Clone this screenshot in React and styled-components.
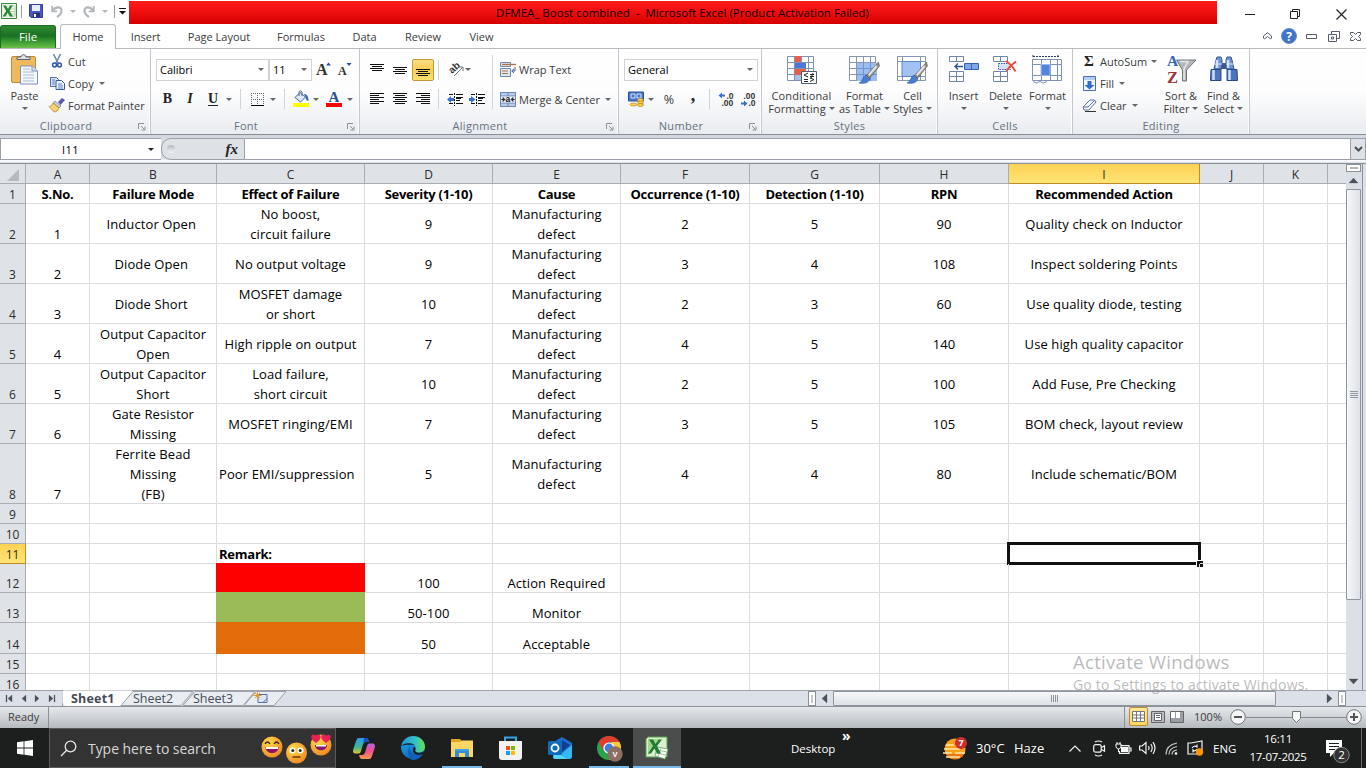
import React from "react";
import styled, { createGlobalStyle, css } from "styled-components";

const Global = createGlobalStyle`
  * { box-sizing: border-box; }
  html, body { margin: 0; padding: 0; overflow: hidden; }
  body { font-family: "Open Sans", "Noto Sans", sans-serif; font-size: 11px; color: #3b3b3b; }
  svg { display: block; flex: none; overflow: visible; }
`;

const Window = styled.div`
  width: 1366px;
  height: 768px;
  display: flex;
  flex-direction: column;
  position: relative;
  overflow: hidden;
  background: #fff;
`;

/* ---------- title bar ---------- */
const TitleBar = styled.div`
  display: flex;
  height: 24px;
  flex: none;
`;
const QuickAccess = styled.div`
  width: 129px;
  height: 22px;
  display: flex;
  align-items: center;
  padding-left: 1px;
`;
const Slot = styled.div`
  width: ${(p) => p.$w}px;
  flex: none;
  display: flex;
  align-items: center;
  justify-content: ${(p) => p.$j || "center"};
`;
const Title = styled.div`
  width: 1088px;
  height: 23px;
  margin-top: 1px;
  display: flex;
  align-items: center;
  justify-content: center;
  padding-left: 19px;
  background: linear-gradient(#fb1b17, #f01010 45%, #d40000);
  color: #120000;
  font-size: 11.5px;
  white-space: pre;
`;
const Controls = styled.div`
  flex: 1;
  display: flex;
  align-items: center;
  padding: 4px 0 0 10px;
`;

/* ---------- tab strip ---------- */
const TabStrip = styled.div`
  display: flex;
  flex: none;
  height: 25px;
  border-bottom: 1px solid #b6babf;
`;
const FileTab = styled.div`
  width: 56px;
  height: 23px;
  margin: 1px 4px 0 0;
  border: 1px solid #1d6b26;
  border-bottom: 0;
  border-radius: 3px 3px 0 0;
  background: linear-gradient(#2f8a2f, #1c7025 45%, #2b8a2b 60%, #6cc04a);
  color: #fff;
  display: flex;
  align-items: center;
  justify-content: center;
  font-size: 11.5px;
  padding: 0 0 2px;
`;
const Tab = styled.div`
  width: ${(p) => p.$w}px;
  height: 24px;
  display: flex;
  align-items: center;
  justify-content: center;
  font-size: 11px;
  white-space: nowrap;
  ${(p) =>
    p.$active &&
    css`
      height: 25px;
      margin-bottom: -1px;
      padding-bottom: 2px;
      border: 1px solid #b6babf;
      border-bottom: 0;
      border-radius: 3px 3px 0 0;
      background: #fff;
    `}
`;
const TabTools = styled.div`
  margin-left: auto;
  display: flex;
  align-items: center;
`;

/* ---------- ribbon ---------- */
const Ribbon = styled.div`
  display: flex;
  flex: none;
  height: 86px;
  background: linear-gradient(#fff, #fdfdfe 50%, #e9ecf0);
  border-bottom: 1px solid #8b9097;
`;
const Group = styled.div`
  width: ${(p) => p.$w}px;
  flex: none;
  display: flex;
  flex-direction: column;
  border-right: 1px solid #c3c7cc;
  box-shadow: inset -1px 0 0 #fff;
`;
const GroupBody = styled.div`
  height: 68px;
  display: flex;
  padding-left: ${(p) => p.$pl || 0}px;
`;
const GroupLabel = styled.div`
  display: flex;
  height: 17px;
  align-items: center;
  justify-content: center;
  position: relative;
  color: #66707e;
  padding-right: ${(p) => p.$pr ?? 18}px;
  letter-spacing: 0.3px;
`;
const Launcher = styled.span`
  position: absolute;
  right: 4px;
  top: 6px;
`;
const Column = styled.div`
  display: flex;
  flex-direction: column;
  width: ${(p) => p.$w}px;
  flex: none;
  padding-top: ${(p) => p.$pt || 0}px;
`;
const Row = styled.div`
  display: flex;
  align-items: center;
  height: ${(p) => p.$h}px;
  flex: none;
`;
const Label = styled.span`
  white-space: nowrap;
  font-size: ${(p) => p.$s || 11}px;
  line-height: 13px;
  margin-left: ${(p) => p.$ml || 0}px;
`;
const BigButton = styled.div`
  width: ${(p) => p.$w}px;
  display: flex;
  flex-direction: column;
  align-items: center;
  padding-top: 5px;
  flex: none;
`;
const BigText = styled.div`
  display: flex;
  align-items: center;
  gap: 3px;
  height: 13px;
  white-space: nowrap;
  letter-spacing: ${(p) => p.$ls || 0}px;
`;
const BigIcon = styled.div`
  height: 35px;
  display: flex;
  align-items: flex-start;
  padding-top: ${(p) => p.$top}px;
`;
const Arrow = styled.i`
  display: inline-block;
  width: 0;
  height: 0;
  flex: none;
  margin-left: ${(p) => p.$ml || 0}px;
  border: 3px solid transparent;
  border-top-color: ${(p) => p.$c || "#666"};
  border-bottom: 0;
`;
const Combo = styled.div`
  width: ${(p) => p.$w}px;
  height: 22px;
  margin-left: ${(p) => p.$ml || 0}px;
  border: 1px solid #cfd2d6;
  background: #fff;
  color: #000;
  display: flex;
  align-items: center;
  justify-content: space-between;
  padding: 0 4px 0 3px;
`;
const Divider = styled.div`
  width: 1px;
  height: ${(p) => p.$h || 20}px;
  background: ${(p) => p.$c || "#d0d3d7"};
  margin: ${(p) => p.$mt || 0}px ${(p) => p.$mr || 0}px 0 ${(p) => p.$ml || 0}px;
  flex: none;
`;
const Glyph = styled.span`
  font-family: "Liberation Serif", serif;
  font-size: ${(p) => p.$s || 14}px;
  font-weight: 700;
  font-style: ${(p) => p.$i || "normal"};
  border-bottom: ${(p) => (p.$u ? "1px solid #222" : "0")};
  padding-bottom: ${(p) => p.$up || 0}px;
  color: #222;
  line-height: 12px;
`;
const Pressed = styled.div`
  width: 22px;
  height: 22px;
  border: 1px solid #c29a3c;
  border-radius: 2px;
  background: linear-gradient(#fddd83, #fdcb50 50%, #ffe36e);
  display: flex;
  align-items: center;
  justify-content: center;
  padding-top: 6px;
`;

/* ---------- formula bar ---------- */
const FormulaBar = styled.div`
  height: 28px;
  flex: none;
  display: flex;
  padding: 3px 0;
  background: linear-gradient(#cfd4dd 0, #d6dae1 3px, #d6dae1 24px, #fff 25px, #eef0f8 27px, #cfd4dd 28px);
`;
const NameBox = styled.div`
  width: 161px;
  height: 22px;
  border: 1px solid #9ba0a8;
  border-right: 0;
  background: #fff;
  color: #000;
  display: flex;
  align-items: center;
  padding-left: 61px;
  justify-content: space-between;
  padding-right: 7px;
  letter-spacing: 0.4px;
`;
const FxArea = styled.div`
  width: 84px;
  height: 22px;
  border: 1px solid #9ba0a8;
  border-radius: 10px 0 0 10px;
  background: #dee1e6;
  display: flex;
  align-items: center;
  justify-content: space-between;
  padding: 0 6px 0 5px;
`;
const FxKnob = styled.span`
  width: 8px;
  height: 8px;
  border-radius: 50%;
  background: linear-gradient(#b3b8bf, #f4f5f7);
`;
const FormulaInput = styled.div`
  flex: 1;
  height: 22px;
  background: #fff;
  border: 1px solid #9ba0a8;
  border-left: 0;
  border-right: 0;
`;
const Expand = styled.div`
  width: 16px;
  height: 22px;
  border: 1px solid #9ba0a8;
  background: #dee1e6;
  display: flex;
  align-items: center;
  justify-content: center;
`;

/* ---------- sheet ---------- */
const Sheet = styled.div`
  height: 527px;
  flex: none;
  display: flex;
  overflow: hidden;
  border-top: 1px solid #8b9097;
`;
const GRID = "26px 64px 127px 148px 128px 128px 129px 130px 129px 191px 64px 64px 19px";
const Grid = styled.div`
  width: 1346px;
  flex: none;
  overflow: hidden;
`;
const GridRow = styled.div`
  display: grid;
  grid-template-columns: ${GRID};
  grid-template-rows: ${(p) => p.$h}px;
  height: ${(p) => p.$h}px;
`;
const Header = styled.div`
  display: flex;
  min-height: 0;
  align-items: ${(p) => (p.$row ? "flex-end" : "center")};
  justify-content: center;
  border-right: 1px solid #a9adb3;
  border-bottom: 1px solid #a9adb3;
  padding-top: ${(p) => (p.$row ? 0 : 2)}px;
  background: #dfe2e7;
  color: #2b2b2b;
  font-size: 12px;
  line-height: 17px;
  ${(p) =>
    p.$on &&
    css`
      background: linear-gradient(#ffd155, #ffe575);
      border-color: #c38a2b;
    `}
`;
const Cell = styled.div`
  display: flex;
  min-height: 0;
  align-items: ${(p) => (p.$bottom ? "flex-end" : "center")};
  justify-content: ${(p) => (p.$left ? "flex-start" : "center")};
  border-right: 1px solid #dadcdd;
  border-bottom: 1px solid #dadcdd;
  padding-left: ${(p) => (p.$left ? 2 : 0)}px;
  position: relative;
  ${(p) =>
    p.$fill &&
    css`
      background: ${p.$fill};
      border-color: ${p.$fill};
      margin: -1px 0 0 -1px;
    `}
`;
const CellText = styled.span`
  margin: ${(p) => (p.$bottom ? "0 0 -1px" : "0.5px 0 -0.5px")};
  text-align: center;
  color: #000;
  font-size: 13px;
  line-height: 20px;
  white-space: pre;
  font-weight: ${(p) => (p.$bold ? 700 : 400)};
  letter-spacing: ${(p) => (p.$bold ? -0.25 : 0.1)}px;
`;
const Selection = styled.div`
  position: absolute;
  left: -2px;
  top: -2px;
  width: 194px;
  height: 23px;
  border: 3px solid #111;
  &::after {
    content: "";
    position: absolute;
    right: -5px;
    bottom: -5px;
    width: 6px;
    height: 6px;
    background: #111;
    border-left: 1px solid #fff;
    border-top: 1px solid #fff;
  }
`;
const VScroll = styled.div`
  width: 17px;
  border-right: 1px solid #8b9097;
  background: #dbdfe6;
  display: flex;
  flex-direction: column;
  align-items: flex-start;
`;
const SplitBox = styled.div`
  width: 15px;
  height: 8px;
  background: #fff;
  border: 1px solid #8b9097;
  display: flex;
  align-items: center;
  justify-content: center;
`;
const ScrollButton = styled.div`
  width: 15px;
  height: ${(p) => p.$h}px;
  display: flex;
  align-items: center;
  justify-content: center;
`;
const VThumb = styled.div`
  width: 15px;
  height: 411px;
  border: 1px solid #8f959e;
  border-radius: 1px;
  background: linear-gradient(90deg, #f5f7f9, #dde1e7);
  display: flex;
  align-items: center;
  justify-content: center;
`;
const Edge = styled.div`
  flex: 1;
  background: #dde1e8;
`;

/* ---------- sheet tabs ---------- */
const TabsBar = styled.div`
  height: 17px;
  flex: none;
  display: flex;
  background: #dce0e8;
  border-top: 1px solid #9ea3ab;
  border-bottom: 1px solid #8b9097;
`;
const NavButtons = styled.div`
  width: 63px;
  border-right: 1px solid #9ea3ab;
  display: flex;
  align-items: center;
  justify-content: space-between;
  padding: 0 6px;
`;
const SheetTabs = styled.div`
  width: 227px;
  position: relative;
`;
const TabNames = styled.div`
  position: absolute;
  left: 8px;
  top: 0;
  display: flex;
  align-items: center;
  height: 15px;
  font-size: 12.5px;
  color: #444b58;
`;
const TabName = styled.span`
  width: ${(p) => p.$w}px;
  font-weight: ${(p) => (p.$bold ? 700 : 400)};
  letter-spacing: ${(p) => (p.$bold ? 0.2 : 0)}px;
`;
const TabFill = styled.div`
  flex: 1;
`;
const HSplit = styled.div`
  width: 8px;
  height: 15px;
  border: 1px solid #8b9097;
  background: #fff;
  display: flex;
  align-items: center;
  justify-content: center;
`;
const HThumb = styled.div`
  width: 443px;
  height: 15px;
  border: 1px solid #8f959e;
  border-radius: 1px;
  background: linear-gradient(#f7f8fa, #dde1e7);
  display: flex;
  align-items: center;
  justify-content: center;
`;

/* ---------- status bar ---------- */
const Status = styled.div`
  height: 21px;
  flex: none;
  display: flex;
  align-items: center;
  background: linear-gradient(#e4e7eb, #cfd3d8 50%, #b5babf);
`;
const ReadyBox = styled.div`
  width: 49px;
  height: 21px;
  padding: 0 0 2px 8px;
  display: flex;
  align-items: center;
  border-right: 1px solid #8b9097;
`;
const StatusRight = styled.div`
  margin-left: auto;
  width: 242px;
  height: 21px;
  padding: 0 0 2px 4px;
  display: flex;
  align-items: center;
  border-left: 1px solid #8b9097;
`;
const ViewOn = styled.div`
  width: 19px;
  height: 19px;
  flex: none;
  border: 1px solid #c08a2e;
  border-radius: 2px;
  background: linear-gradient(#ffe79a, #ffd75c);
  display: flex;
  align-items: center;
  justify-content: center;
`;

/* ---------- taskbar ---------- */
const Taskbar = styled.div`
  height: 40px;
  flex: none;
  display: flex;
  background: #1d1e1e;
  color: #fff;
`;
const Search = styled.div`
  width: 287px;
  height: 40px;
  flex: none;
  background: #333;
  border: 1px solid #5a5a5a;
  display: flex;
  align-items: center;
  padding-left: 10px;
  color: #d8d8d8;
  font-size: 14px;
`;
const SearchText = styled.span`
  width: 173px;
  flex: none;
  margin: 0 0 0 11px;
  white-space: nowrap;
  letter-spacing: -0.05px;
`;
const TaskButton = styled.div`
  width: ${(p) => p.$w || 49}px;
  height: 40px;
  flex: none;
  display: flex;
  align-items: center;
  justify-content: center;
  background: ${(p) => (p.$active ? "#4b4c4c" : "transparent")};
  box-shadow: ${(p) => (p.$active ? "inset 0 -2px 0 #76b9ed" : "none")};
`;
const Running = styled.div`
  width: 40px;
  height: 40px;
  display: flex;
  align-items: center;
  justify-content: center;
  box-shadow: inset 0 -2px 0 #76b9ed;
`;
const TrayText = styled.span`
  width: ${(p) => p.$w}px;
  flex: none;
  white-space: nowrap;
  font-size: ${(p) => p.$s}px;
`;
const Tray = styled.div`
  display: flex;
  align-items: center;
  width: 576px;
  height: 40px;
`;
const Clock = styled.div`
  width: 78px;
  flex: none;
  display: flex;
  flex-direction: column;
  align-items: center;
  font-size: 11.5px;
  line-height: 18px;
  letter-spacing: -0.3px;
  padding-bottom: 1px;
`;
const Chevrons = styled.span`
  width: 98px;
  flex: none;
  font-size: 14px;
  font-weight: 700;
  line-height: 12px;
  align-self: flex-start;
  margin: 2px 0 0 1px;
`;
const Watermark = styled.div`
  position: absolute;
  left: 1073px;
  top: 650px;
  color: rgba(140, 140, 140, 0.6);
  white-space: nowrap;
`;
const WaterTitle = styled.div`
  font-size: 18.5px;
  letter-spacing: 0.3px;
  line-height: 24px;
`;
const WaterSub = styled.div`
  font-size: 14px;
  letter-spacing: 0.17px;
  line-height: 22px;
`;

/* ---------- icons ---------- */
const ExcelLogo = ({ s = 16 }) => (
  <svg width={s} height={s} viewBox="0 0 16 16">
    <path d="M.5.5h15v15H.5z" fill="#e9f4e6" stroke="#3b8a3f" />
    <path d="M9 3h5v10H8z" fill="#fff" stroke="#8cbd84" strokeWidth=".6" />
    <path d="M9 6h5M9 8.500h5M10 11h4" stroke="#8cbd84" strokeWidth=".7" />
    <path d="M2 2.500h3l2 3.500 2-3.500h2.800L8.500 7.800 12 13.500H9L6.700 9.800 4.500 13.500H1.600L5.200 8z" fill="#2a8534" />
  </svg>
);
const TaskExcel = () => (
  <svg width="24" height="24" viewBox="0 0 24 24">
    <path d="M3 1h19v20H1V3z" fill="#d9efcf" stroke="#5b9c52" />
    <path d="M3 3h12L8 14 3 19z" fill="#8ecb6d" opacity=".7" />
    <path d="M12 11l11 2-3 10-10-3z" fill="#fff" stroke="#65a25d" strokeWidth=".8" />
    <path d="M12 14l10 2M11 17l10 2M16 12l-3 9" stroke="#80b878" strokeWidth=".8" />
    <path d="M4 3.500h4l2.500 4.500 3.200-4.500h3.300l-5 6.500 4 7.500h-4l-2.500-5-3.500 5H3l5-7.500z" fill="#217b32" />
  </svg>
);
const Save = () => (
  <svg width="14" height="14" viewBox="0 0 14 14">
    <path d="M.5.5h13v13H2L.5 12z" fill="#4b58c4" stroke="#313c9b" />
    <path d="M3 1h8v6H3z" fill="#e8eefb" />
    <path d="M4 9h7v4H4z" fill="#2a3070" />
    <path d="M5 10h2v3H5z" fill="#fff" />
  </svg>
);
const Undo = ({ flip }) => (
  <svg width="12" height="13" viewBox="0 0 12 13">
    <g transform={flip ? "translate(12 0) scale(-1 1)" : undefined} fill="none" stroke="#b3b6bb">
      <path d="M2 5.500C4 1.500 10.500 1 10.500 5.500c0 3-2 5-4.500 6.500" strokeWidth="2.200" />
      <path d="M1.200 1v5.300h5" strokeWidth="1.800" />
    </g>
  </svg>
);
const Lines = ({ rows, w = 14, h = 12 }) => (
  <svg width={w} height={h} viewBox={`0 0 ${w} ${h}`}>
    {rows.map(([x, y, l], i) => (
      <path key={i} d={`M${x} ${y + 0.5}h${l}`} stroke="#111" />
    ))}
  </svg>
);
const TOP = [[0, 0, 14], [2, 2, 10], [0, 4, 14], [2, 6, 10]];
const MID = [[0, 3, 14], [2, 5, 10], [0, 7, 14], [2, 9, 10]];
const LEFT = [[0, 0, 14], [0, 2, 9], [0, 4, 14], [0, 6, 9], [0, 8, 14], [0, 10, 9]];
const CENTER = [[0, 0, 14], [2, 2, 10], [0, 4, 14], [2, 6, 10], [0, 8, 14], [2, 10, 10]];
const RIGHT = [[0, 0, 14], [5, 2, 9], [0, 4, 14], [5, 6, 9], [0, 8, 14], [5, 10, 9]];
const Indent = ({ out }) => (
  <svg width="16" height="13" viewBox="0 0 16 13">
    <path d="M2 1.500h4M9 1.500h7M9 4.500h7M9 7.500h4M2 10.500h4M9 10.500h7" stroke="#111" />
    <path d="M9 5.500h5" stroke="#111" />
    <path d="M7.500 0v13" stroke="#111" strokeDasharray="2 1" />
    <path d={out ? "M4 3v2h3v3H4v2L0 6.500z" : "M2 3v2H0v3h2v2l4.500-3.500z"} fill="#3a6fd0" />
  </svg>
);
const Orient = () => (
  <svg width="16" height="15" viewBox="0 0 16 15">
    <text x="0" y="0" fontSize="10" fontFamily="Liberation Sans" fontWeight="700" fill="#333" transform="translate(4 12) rotate(-42)">ab</text>
    <path d="M6 14L14.500 5.500M11 5h4v4" fill="none" stroke="#777" />
  </svg>
);
const Wrap = () => (
  <svg width="16" height="15" viewBox="0 0 16 15">
    <path d="M.5.5h10v4H.5zM.5 6.500h10v8H.5z" fill="#dfe8f5" stroke="#7088ab" />
    <path d="M2 2.500h14" stroke="#b0714a" strokeWidth="1.400" />
    <path d="M2 9h6M2 11.500h6" stroke="#b0714a" />
    <path d="M15 5v4h-3m2-2l-2.300 2 2.300 2" fill="none" stroke="#3f5f9a" />
  </svg>
);
const Merge = () => (
  <svg width="16" height="15" viewBox="0 0 16 15">
    <path d="M.5.500h15v14H.5z" fill="#b8cdec" stroke="#6d86ae" />
    <path d="M0 4h16M0 11h16M8 0v4M8 11v4" stroke="#6d86ae" />
    <path d="M1 4.500h14v6H1z" fill="#e9f0fa" />
    <path d="M1 7.500h3M12 7.500h3M3 5.500v4l2-2zM13 5.500v4l-2-2z" stroke="#222" fill="#222" strokeWidth=".7" />
    <text x="5.600" y="10" fontSize="8.500" fontFamily="Liberation Sans" fontWeight="700" fill="#111">a</text>
  </svg>
);
const Scissors = () => (
  <svg width="10" height="14" viewBox="0 0 10 14">
    <path d="M1.500 0l4.500 9M8.500 0L4 9" stroke="#6d86ae" strokeWidth="1.600" />
    <circle cx="2.500" cy="11" r="1.900" fill="none" stroke="#2b56a8" strokeWidth="1.500" />
    <circle cx="7.500" cy="11" r="1.900" fill="none" stroke="#2b56a8" strokeWidth="1.500" />
  </svg>
);
const Copy = () => (
  <svg width="15" height="13" viewBox="0 0 15 13">
    <path d="M.5.500h6l2 2v7h-8z" fill="#dbe7f8" stroke="#4a6fa8" />
    <path d="M6 3.500h5.500l3 3v6H6z" fill="#eaf2fc" stroke="#345d9d" />
    <path d="M2 3h3M2 5h3M2 7h3M8 7h4M8 9h5M8 11h5" stroke="#5a86c4" />
  </svg>
);
const Brush = () => (
  <svg width="16" height="14" viewBox="0 0 16 14">
    <path d="M9 4l4-4 3 2-4.500 5z" fill="#5a56a8" />
    <path d="M6 3l6 5-2 2-6-5z" fill="#c7ccd6" stroke="#6a7080" strokeWidth=".6" />
    <path d="M4 5l6 5c-1 3-3 4-5 4L0 8.500C2 8 3 7 4 5z" fill="#f2c752" stroke="#a9812a" strokeWidth=".6" />
    <path d="M2 8.500l5 4M4 7l5 4" stroke="#fff3c0" strokeWidth=".8" />
  </svg>
);
const Paste = () => (
  <svg width="27" height="31" viewBox="0 0 27 31">
    <rect x=".5" y="2.500" width="24" height="26" rx="1.500" fill="#efb95f" stroke="#bd8a3c" />
    <path d="M6 5.500V3h4c0-3 5-3 5 0h4v2.500z" fill="#dfe2e7" stroke="#596270" />
    <path d="M9.500 12h12l5 5v13h-17z" fill="#f4f8fd" stroke="#7d93b5" />
    <path d="M21 12v5h5" fill="#d5e1f2" stroke="#7d93b5" />
    <path d="M12 15h7M12 18h11M12 21h11M12 24h11M12 27h11" stroke="#a6bbda" />
  </svg>
);
const Borders = () => (
  <svg width="13" height="13" viewBox="0 0 13 13">
    <path d="M.5 0v12M6.500 0v12M12.500 0v12M0 .500h13M0 6.500h13" stroke="#666" strokeDasharray="1 1" />
    <path d="M0 12.500h13" stroke="#000" />
  </svg>
);
const Bucket = () => (
  <svg width="16" height="16" viewBox="0 0 16 16">
    <path d="M2 6.500l5-5 5.500 4.500-5 5z" fill="#dfe9f7" stroke="#46638f" />
    <path d="M6 5V1.500a1.500 1.500 0 013 0V5" fill="none" stroke="#46638f" />
    <path d="M11 3c3 0 4.500 2 4.500 7-2 0-3-2-3-4z" fill="#3b6cbc" />
    <path d="M0 12h16v4H0z" fill="#ff0" />
  </svg>
);
const FontColor = () => (
  <svg width="16" height="16" viewBox="0 0 16 16">
    <text x="2.500" y="10.500" fontSize="15" fontFamily="Liberation Serif" fontWeight="700" fill="#2d4f92">A</text>
    <path d="M0 12h16v4H0z" fill="#f00" />
  </svg>
);
const GrowFont = ({ down }) => (
  <svg width="15" height="15" viewBox="0 0 15 15">
    <text x="0" y="13" fontSize={down ? 12 : 16} fontFamily="Liberation Serif" fontWeight="700" fill="#333">A</text>
    <path d={down ? "M8.500 1h5L11 4z" : "M10 3.500h5L12.500.500z"} fill="#2d4fa0" />
  </svg>
);
const Currency = () => (
  <svg width="17" height="16" viewBox="0 0 17 16">
    <path d="M.5 1h15v9H.5z" fill="#4a78c9" stroke="#2b509a" />
    <path d="M3 3h4v4H3zM9 3h4v4H9z" fill="none" stroke="#cfe0fa" />
    <ellipse cx="12.500" cy="9" rx="3" ry="1.500" fill="#ffd24a" stroke="#a87412" strokeWidth=".6" />
    <ellipse cx="12.500" cy="11.500" rx="3" ry="1.500" fill="#ffd24a" stroke="#a87412" strokeWidth=".6" />
    <ellipse cx="12.500" cy="14" rx="3" ry="1.500" fill="#ffd24a" stroke="#a87412" strokeWidth=".6" />
    <ellipse cx="5.500" cy="13.500" rx="3.500" ry="1.500" fill="#ffd24a" stroke="#a87412" strokeWidth=".6" />
  </svg>
);
const Decimal = ({ dec }) => (
  <svg width="16" height="14" viewBox="0 0 16 14">
    <text x={dec ? 3.500 : 8.500} y="6.500" fontSize="8.500" fontWeight="700" fontFamily="Liberation Sans" fill="#333">{dec ? ".00" : ".0"}</text>
    <text x={dec ? 8.500 : 3.500} y="14" fontSize="8.500" fontWeight="700" fontFamily="Liberation Sans" fill="#333">{dec ? ".0" : ".00"}</text>
    <path d={dec ? "M1 10.500h3v-2l3.500 3-3.500 3v-2H1z" : "M.5 3.500l3.500-3v2h3v2H4v2z"} fill="#3a6fd0" />
  </svg>
);
const grid = "M.5.500h26v24H.5zM0 6.500h27M0 12.500h27M0 18.500h27M7.500 0v24M14.500 0v24M21.500 0v24";
const CondFormat = () => (
  <svg width="30" height="28" viewBox="0 0 30 28">
    <path d={grid} fill="#fff" stroke="#7f93b5" />
    <path d="M8 0h6v6H8zM8 13h11v6H8z" fill="#ee5a44" />
    <path d="M8 7h11v5H8z" fill="#4a78d8" />
    <path d="M8 19h6v5H8z" fill="#a9c0ea" />
    <path d="M14.500 15.500h15v12h-15z" fill="#fff" stroke="#506078" />
    <path d="M21 17l-4 2 4 2M17 23.500h4M17 25.500h4M23 18.500h4M23 20.500h4M26 17l-2 5M23 22l4 1.500-4 2" fill="none" stroke="#222" />
  </svg>
);
const PaintBrush = () => (
  <g>
    <path d="M29.500 6L17 20l3 3L30.500 10z" fill="#8f8b80" stroke="#5c5a55" strokeWidth=".6" />
    <path d="M27 9l-8 9.500 1.500 1.500 8-9z" fill="#e5e2d8" />
    <path d="M17 19l4 4c-2 4-5 5-11 4 4-1 3-6 7-8z" fill="#4a7fd0" stroke="#27539c" strokeWidth=".6" />
  </g>
);
const FormatTable = () => (
  <svg width="31" height="28" viewBox="0 0 31 28">
    <path d={grid} fill="#fff" stroke="#8796b1" />
    <path d="M8 7h20v18H8z" fill="#9dbcf0" />
    <path d="M8 12.500h20M8 18.500h20M14.500 7v18M21.500 7v18" stroke="#6f92d0" />
    <PaintBrush />
  </svg>
);
const CellStyles = () => (
  <svg width="31" height="28" viewBox="0 0 31 28">
    <path d="M.5.500h28v24H.5zM0 5.500h29M0 20.500h29M5.500 0v25M23.500 0v25" fill="#fff" stroke="#8796b1" />
    <path d="M5 5.500h18.500v15H5z" fill="#a3c2f4" stroke="#5c82c8" />
    <PaintBrush />
  </svg>
);
const InsertCells = () => (
  <svg width="30" height="27" viewBox="0 0 30 27">
    <path d="M.5.500h14v5H.5zM7.500 0v6M.5 15.500h14v10H.5zM7.500 15v11M0 20.500h15" fill="#fff" stroke="#7085a8" />
    <path d="M15.500 7.500h14v6h-14zM22.500 7v7" fill="#7ea6ec" stroke="#365fae" />
    <path d="M6 10.500h8M9 7.500l-3 3 3 3" fill="none" stroke="#31528c" strokeWidth="1.300" />
  </svg>
);
const DeleteCells = () => (
  <svg width="25" height="27" viewBox="0 0 25 27">
    <path d="M.5.500h14v5H.5zM7.500 0v6M.5 15.500h14v10H.5zM7.500 15v11M0 20.500h15" fill="#fff" stroke="#7085a8" />
    <path d="M5.500 7.500h12v6h-12z" fill="#d5e3fa" stroke="#365fae" strokeDasharray="1.500 1" />
    <path d="M13 5c4 2.500 7 6 9.500 10.500M23 5.500c-4 3-7.500 6-9.500 9.500" stroke="#f04a34" strokeWidth="2" fill="none" />
  </svg>
);
const FormatCells = () => (
  <svg width="31" height="29" viewBox="0 0 31 29">
    <path d="M1 1.500h26M1 0v3M26 0v3" stroke="#26395e" strokeDasharray="2 1" />
    <path d="M.5 4.500h29v21H.5zM0 9.500h30M0 20.500h30M9.500 4v21M18.500 4v21M25.500 4v21" fill="#fff" stroke="#8093b4" />
    <path d="M9 9.500h9v11H9z" fill="#5583dc" stroke="#9db9ec" />
    <path d="M1 26.500q3 3 7 0 3 3 7 0" fill="none" stroke="#8093b4" />
  </svg>
);
const Fill = () => (
  <svg width="13" height="15" viewBox="0 0 13 15">
    <path d="M.5.500h12v14H.5z" fill="#f2f6fd" stroke="#4a6fae" />
    <path d="M1 1h11v3H1z" fill="#b9cdf0" />
    <path d="M4.500 5h4v4h3l-5 4.500L1.500 9h3z" fill="#2f6cd4" />
  </svg>
);
const Eraser = () => (
  <svg width="15" height="13" viewBox="0 0 15 13">
    <path d="M1 8l7-7h4.500L14 3 7 11H2z" fill="#f4f7fc" stroke="#60779f" />
    <path d="M1 8h5l7-7" fill="none" stroke="#60779f" />
    <path d="M3 12.500h11" stroke="#333" />
  </svg>
);
const SortFilter = () => (
  <svg width="29" height="29" viewBox="0 0 29 29">
    <text x="0" y="11" fontSize="15.500" fontFamily="Liberation Serif" fontWeight="700" fill="#3767b5">A</text>
    <text x="0" y="28" fontSize="16.500" fontFamily="Liberation Serif" fontWeight="700" fill="#a03535">Z</text>
    <path d="M9.500 5h19.500l-9.500 10v11h-4V15z" fill="#b5b8bb" stroke="#707478" />
    <path d="M13 6.500h8l-4 7.500v11" fill="none" stroke="#e6e8ea" strokeWidth="1.500" />
  </svg>
);
const Binoculars = () => (
  <svg width="28" height="27" viewBox="0 0 28 27">
    <path d="M6 4l1-3h4l1 3v9H4zM16 4l1-3h4l1 3 2 9h-8z" fill="#6e93d4" stroke="#38588f" />
    <path d="M11 7h6v6h-6z" fill="#38588f" />
    <path d="M1 13.500h10v11H.5zM17 13.500h10l.5 11H17z" fill="#4b74be" stroke="#2a4a85" />
    <path d="M3.500 14v10M19.500 14v10M7 4v8M18 4v8" stroke="#cfe0fa" strokeWidth="2.500" />
    <path d="M4 8h8M16 8h8" stroke="#dfe9fa" />
  </svg>
);
const LauncherIcon = () => (
  <svg width="8" height="8" viewBox="0 0 8 8">
    <path d="M.5 6V.500H6M3 3l3.500 3.500M7 3.500V7H3.500" fill="none" stroke="#8b9097" />
  </svg>
);
const Tri = ({ d, c = "#4b5058", w = 9, h = 9 }) => (
  <svg width={w} height={h} viewBox={`0 0 ${w} ${h}`}>
    <path d={d} fill={c} stroke={c} strokeWidth=".3" />
  </svg>
);

/* ---------- taskbar icons ---------- */
const WinLogo = () => (
  <svg width="16" height="16" viewBox="0 0 16 16">
    <path d="M0 2.200l6.600-.9v6.300H0zM7.400 1.200L16 0v7.600H7.400zM0 8.400h6.600v6.300L0 13.800zM7.400 8.400H16V16l-8.600-1.200z" fill="#fff" />
  </svg>
);
const Lens = () => (
  <svg width="17" height="17" viewBox="0 0 17 17">
    <circle cx="10.500" cy="6.500" r="5.300" fill="none" stroke="#e6e6e6" strokeWidth="1.300" />
    <path d="M6.700 10.300L1 16" stroke="#e6e6e6" strokeWidth="1.400" />
  </svg>
);
const Emojis = () => (
  <svg width="72" height="32" viewBox="0 0 72 32">
    <defs>
      <radialGradient id="face" cx=".35" cy=".3" r=".8">
        <stop offset="0" stopColor="#ffdb4a" />
        <stop offset="1" stopColor="#ee8420" />
      </radialGradient>
    </defs>
    <circle cx="11" cy="15" r="10.500" fill="url(#face)" />
    <path d="M4 12q2.500-4 5 0M13 12q2.500-4 5 0" fill="none" stroke="#4a2510" strokeWidth="1.400" />
    <path d="M4.500 15h13c0 8-13 8-13 0z" fill="#8c1465" />
    <path d="M5 15h12v2H5z" fill="#fff" />
    <circle cx="35.500" cy="21" r="10.500" fill="url(#face)" />
    <circle cx="31.500" cy="18.500" r="3" fill="#fff" />
    <circle cx="39.500" cy="18.500" r="3" fill="#fff" />
    <circle cx="31.800" cy="18.500" r="1.500" fill="#38251b" />
    <circle cx="39.200" cy="18.500" r="1.500" fill="#38251b" />
    <path d="M31.500 25h8" stroke="#6b3510" strokeWidth="1.500" />
    <circle cx="60" cy="13" r="10.500" fill="url(#face)" />
    <path d="M55 11c-9-6-3-11 0-7 4-4 8 2 0 7zM65 11c-9-6-3-11 0-7 4-4 8 2 0 7z" fill="#e82155" />
    <path d="M54 13h12c0 7-12 7-12 0z" fill="#8c1465" />
    <path d="M55 13h10v1.500H55z" fill="#fff" />
  </svg>
);
const Copilot = () => (
  <svg width="22" height="21" viewBox="0 0 22 21">
    <defs>
      <linearGradient id="cpa" x1="0" y1="0" x2="0" y2="1">
        <stop offset="0" stopColor="#2b9df0" />
        <stop offset=".6" stopColor="#3fb68b" />
        <stop offset="1" stopColor="#e7c52c" />
      </linearGradient>
      <linearGradient id="cpb" x1="0" y1="0" x2="0" y2="1">
        <stop offset="0" stopColor="#b75fe0" />
        <stop offset=".5" stopColor="#f0508c" />
        <stop offset="1" stopColor="#ff9a50" />
      </linearGradient>
    </defs>
    <path d="M6 0h7c2 0 2.500 2 3 4h-3c-2 0-3 2-3.500 4L8 13c-.5 2-1.500 2.500-3 2.500H3c-3 0-3.500-2-2.500-5L3 3c.6-2 1.500-3 3-3z" fill="url(#cpa)" />
    <path d="M11 0h2c2 0 2.500 2 3 4h-3c-1.500 0-2.300 1-2.800 2.500z" fill="#1a4fc4" />
    <path d="M16 21H9c-2 0-2.500-2-3-4h3c2 0 3-2 3.500-4L14 8c.5-2 1.500-2.500 3-2.500h2c3 0 3.500 2 2.500 5L19 18c-.6 2-1.500 3-3 3z" fill="url(#cpb)" />
  </svg>
);
const EdgeLogo = () => (
  <svg width="24" height="24" viewBox="0 0 24 24">
    <defs>
      <linearGradient id="eg" x1="0" y1=".4" x2="1" y2=".4">
        <stop offset="0" stopColor="#1d94dc" />
        <stop offset=".6" stopColor="#35c1c8" />
        <stop offset="1" stopColor="#6be04a" />
      </linearGradient>
      <linearGradient id="eb" x1="0" y1="0" x2="1" y2="1">
        <stop offset="0" stopColor="#1d9be6" />
        <stop offset="1" stopColor="#0c4fa3" />
      </linearGradient>
    </defs>
    <path d="M0 11a12 12 0 0024 0c0-2-24-4-24 0z" fill="url(#eb)" />
    <path d="M0 11C1 4 6 0 12 0c7 0 12 5 12 10.500 0 4-3 6-6 6-2.500 0-4.500-.8-4-2 1.500-1.500 1.200-6-3.500-7C6 6.500 1 8 0 11z" fill="url(#eg)" />
    <path d="M9 9c-2 6 3 12 13 9-2.500 4-6 6-10 6-5 0-6.500-10-3-15z" fill="#1160b7" />
    <path d="M14 14.500c1 3 5 3 9 1l-1 2.500c-5 2-10 .5-10-4 0-2 1-3 1.500-3 1.500 1 1 2.500.5 3.500z" fill="#1d1e1e" />
  </svg>
);
const Folder = () => (
  <svg width="22" height="19" viewBox="0 0 22 19">
    <path d="M0 0h9l2 2h11v16H0z" fill="#e9a51f" />
    <path d="M0 3h9l2-1.500h11V18H0z" fill="#fdd766" />
    <path d="M4 10h14v8h-4v-4H8v4H4z" fill="#2f8ed6" />
    <path d="M4 10h14v2H4z" fill="#3fa3ea" />
  </svg>
);
const Store = () => (
  <svg width="23" height="24" viewBox="0 0 23 24">
    <path d="M6 7V1.500h11V7" fill="none" stroke="#2fa9e0" strokeWidth="2" />
    <path d="M0 5h23v16q0 3-3 3H3q-3 0-3-3z" fill="#f2f2f2" />
    <path d="M7 10h4v4H7z" fill="#f25022" />
    <path d="M12 10h4v4h-4z" fill="#7fba00" />
    <path d="M7 15h4v4H7z" fill="#00a4ef" />
    <path d="M12 15h4v4h-4z" fill="#ffb900" />
  </svg>
);
const Outlook = () => (
  <svg width="24" height="22" viewBox="0 0 24 22">
    <path d="M4 6L14 0l10 6v13q0 3-3 3H6z" fill="#1a6fd0" />
    <path d="M14 3l8 5-8 7z" fill="#123e8c" />
    <path d="M24 8v11q0 3-3 3H7z" fill="#35b8f1" />
    <path d="M6 14l13 8H7q-2 0-2-2z" fill="#50d9ff" />
    <rect y="4" width="14" height="14" rx="1.500" fill="#0f6cbd" />
    <circle cx="7" cy="11" r="3.500" fill="none" stroke="#fff" strokeWidth="1.800" />
  </svg>
);
const Chrome = () => (
  <svg width="24" height="24" viewBox="0 0 24 24">
    <circle cx="12" cy="12" r="12" fill="#2ba24c" />
    <path d="M1.600 6A12 12 0 0122.400 6H12l-5 9z" fill="#e33b2e" />
    <path d="M22.400 6A12 12 0 0112 24l5.500-9L14 6z" fill="#fcc934" />
    <circle cx="12" cy="12" r="5.600" fill="#fff" />
    <circle cx="12" cy="12" r="4.400" fill="#3d7de8" />
    <circle cx="18" cy="18" r="7.700" fill="#8d6e63" />
    <text x="18" y="20.800" textAnchor="middle" fontSize="7.500" fontWeight="700" fontFamily="Liberation Sans" fill="#fff">V</text>
  </svg>
);
const Weather = () => (
  <svg width="24" height="23" viewBox="0 0 24 23">
    <circle cx="12" cy="12" r="10.500" fill="#f9a01b" />
    <path d="M3 17h18a10.500 10.500 0 01-18 0z" fill="#ef7417" />
    <path d="M3 8h8M1 12h16M0 16h9M12 16h10M3 20h14" stroke="#ffe6a3" strokeWidth="1.500" />
    <circle cx="18" cy="6" r="6" fill="#cf2e2e" />
    <text x="18" y="9" textAnchor="middle" fontSize="9" fontWeight="700" fontFamily="Open Sans" fill="#fff">7</text>
  </svg>
);
const stroke = { fill: "none", stroke: "#f2f2f2", strokeWidth: 1.2 };
const UpChevron = () => (
  <svg width="12" height="7" viewBox="0 0 12 7"><path d="M.5 6.500L6 1l5.500 5.500" {...stroke} /></svg>
);
const MeetNow = () => (
  <svg width="12" height="17" viewBox="0 0 12 17">
    <rect x=".7" y="4.700" width="7.500" height="7.500" rx="2" {...stroke} />
    <path d="M8.500 7.500l3-1.700v5.500l-3-1.700M2 2q3.500-2 7 0M2 15q3.500 2 7 0" {...stroke} />
  </svg>
);
const Battery = () => (
  <svg width="16" height="13" viewBox="0 0 16 13">
    <path d="M5 3.600h9v7.800H4.500V9M14.500 6h1.500v3h-1.500" {...stroke} />
    <path d="M6 5h7v5H6z" fill="#fff" />
    <path d="M1 2h5v3q-1 2-2.500 2T1 5zM2 0v2M5 0v2M3.500 7v3" fill="#1d1e1e" stroke="#fff" />
  </svg>
);
const Speaker = () => (
  <svg width="17" height="14" viewBox="0 0 17 14">
    <path d="M.6 5h2.500L7 1.500v11L3.100 9H.6zM9.500 5q1.300 2 0 4M11.800 3q2.800 4 0 8M14 1.200q4 5.800 0 11.600" {...stroke} />
  </svg>
);
const Wifi = () => (
  <svg width="13" height="13" viewBox="0 0 13 13">
    <path d="M1 12.500Q1 3 12 1M4 12.500Q4 6 12 4.500M7 12.500q0-4 5-4.500" {...stroke} stroke="#c9c9c9" />
    <circle cx="11" cy="11.500" r="1.300" fill="#fff" />
  </svg>
);
const Sync = () => (
  <svg width="17" height="16" viewBox="0 0 17 16">
    <path d="M4 3H1v11h9M4 3l11-2v9M5 8q2-3 5-1V4.500M10 9q-2 3-4 1v2.500" {...stroke} />
    <circle cx="12.500" cy="12" r="3.700" fill="#ff9800" />
  </svg>
);
const Notify = () => (
  <svg width="25" height="25" viewBox="0 0 25 25">
    <path d="M1 4h16v13H9l-4 4v-4H1z" fill="#fff" />
    <path d="M4 7.500h10M4 10.500h10M4 13.500h6" stroke="#1d1e1e" />
    <circle cx="16.500" cy="19" r="7.700" fill="#333" stroke="#888" />
    <text x="16.500" y="23" textAnchor="middle" fontSize="11.500" fontFamily="Open Sans" fill="#fff">2</text>
  </svg>
);

/* ---------- data ---------- */
const MD = "Manufacturing\ndefect";
const rows = [
  { n: 1, h: 20, bold: true, c: ["S.No.", "Failure Mode", "Effect of Failure", "Severity (1-10)", "Cause", "Occurrence (1-10)", "Detection (1-10)", "RPN", "Recommended Action"] },
  { n: 2, h: 40, c: ["1", "Inductor Open ", "No boost,\ncircuit failure", "9", MD, "2", "5", "90", "Quality check on Inductor"] },
  { n: 3, h: 40, c: ["2", "Diode Open ", "No output voltage", "9", MD, "3", "4", "108", "Inspect soldering Points"] },
  { n: 4, h: 40, c: ["3", "Diode Short ", "MOSFET damage\nor short", "10", MD, "2", "3", "60", "Use quality diode, testing"] },
  { n: 5, h: 40, c: ["4", "Output Capacitor\nOpen", "High ripple on output", "7", MD, "4", "5", "140", "Use high quality capacitor"] },
  { n: 6, h: 40, c: ["5", "Output Capacitor\nShort", "Load failure,\nshort circuit", "10", MD, "2", "5", "100", "Add Fuse, Pre Checking"] },
  { n: 7, h: 40, c: ["6", "Gate Resistor\nMissing", "MOSFET ringing/EMI", "7", MD, "3", "5", "105", "BOM check, layout review"] },
  { n: 8, h: 60, c: ["7", "Ferrite Bead\nMissing\n(FB)", "Poor EMI/suppression", "5", MD, "4", "4", "80", "Include schematic/BOM"] },
  { n: 9, h: 20, c: [] },
  { n: 10, h: 20, c: [] },
  { n: 11, h: 20, bold: true, c: ["", "", "Remark:"] },
  { n: 12, h: 29, low: true, fill: "#ff0000", c: ["", "", "", "100", "Action Required"] },
  { n: 13, h: 30, low: true, fill: "#9bbb59", c: ["", "", "", "50-100", "Monitor"] },
  { n: 14, h: 31, low: true, fill: "#e26b0a", c: ["", "", "", "50", "Acceptable"] },
  { n: 15, h: 20, c: [] },
  { n: 16, h: 20, c: [] },
];
const cols = "ABCDEFGHIJKL".split("");

const Big = ({ w, icon, a, b, top = 2, ls }) => (
  <BigButton $w={w}>
    <BigIcon $top={top}>{icon}</BigIcon>
    <BigText $ls={ls}>{a}</BigText>
    <BigText $ls={ls}>
      {b}
      <Arrow />
    </BigText>
  </BigButton>
);

export default function App() {
  return (
    <Window>
      <Global />
      <TitleBar>
        <QuickAccess>
          <Slot $w={16}><ExcelLogo /></Slot>
          <Divider $h={13} $ml={4} $mr={7} $c="#9a9da2" />
          <Slot $w={14}><Save /></Slot>
          <Slot $w={28}><Undo /></Slot>
          <Slot $w={4}><Arrow $c="#b3b6bb" /></Slot>
          <Slot $w={28}><Undo flip /></Slot>
          <Slot $w={4}><Arrow $c="#b3b6bb" /></Slot>
          <Divider $h={13} $ml={7} $mr={4} $c="#9a9da2" />
          <svg width="7" height="7"><path d="M0 .500h7" stroke="#111" /><path d="M0 3h7L3.500 6.500z" fill="#111" /></svg>
        </QuickAccess>
        <Title>{"DFMEA_ Boost combined  -  Microsoft Excel (Product Activation Failed)"}</Title>
        <Controls>
          <Slot $w={45}><svg width="10" height="10"><path d="M0 5.500h10" stroke="#222" /></svg></Slot>
          <Slot $w={46}>
            <svg width="10" height="10"><path d="M.5 2.500h7v7h-7zM2.500 2.500v-2h7v7h-2" fill="none" stroke="#222" /></svg>
          </Slot>
          <Slot $w={46}><svg width="11" height="11"><path d="M.5.500l10 10M10.500.500l-10 10" stroke="#222" strokeWidth="1.200" /></svg></Slot>
        </Controls>
      </TitleBar>

      <TabStrip>
        <FileTab>File</FileTab>
        <Tab $w={56} $active>Home</Tab>
        <Tab $w={59}>Insert</Tab>
        <Tab $w={88}>Page Layout</Tab>
        <Tab $w={76}>Formulas</Tab>
        <Tab $w={51}>Data</Tab>
        <Tab $w={66}>Review</Tab>
        <Tab $w={51}>View</Tab>
        <TabTools>
          <Slot $w={22}><svg width="9" height="8"><path d="M.5 4L4.500.700 8.500 4v2l-1 1L4.500 4.500 1.500 7 .5 6z" fill="#fff" stroke="#555d68" /></svg></Slot>
          <Slot $w={22}>
            <svg width="16" height="16">
              <circle cx="8" cy="8" r="7.500" fill="#3f74cc" stroke="#6d8fc8" />
              <text x="8" y="12.500" textAnchor="middle" fontSize="12" fontWeight="700" fill="#fff">?</text>
            </svg>
          </Slot>
          <Slot $w={23}><svg width="11" height="5"><path d="M.5.500h10v4H.5z" fill="#fff" stroke="#555d68" /></svg></Slot>
          <Slot $w={21}>
            <svg width="12" height="11"><path d="M.5 3.500h8v7h-8zM3.500 6h2v2h-2zM3.500 3V.500h8v7H9" fill="none" stroke="#555d68" /></svg>
          </Slot>
          <Slot $w={22}>
            <svg width="11" height="9"><path d="M.5.500h3l2 2 2-2h3v2l-2 2 2 2v2h-3l-2-2-2 2h-3v-2l2-2-2-2z" fill="#fff" stroke="#555d68" /></svg>
          </Slot>
        </TabTools>
      </TabStrip>

      <Ribbon>
        <Group $w={151}>
          <GroupBody>
            <Big w={49} icon={<Paste />} a="Paste" b="" top={0} />
            <Column $w={100} $pt={1}>
              <Row $h={22}><Slot $w={16}><Scissors /></Slot><Label $ml={3}>Cut</Label></Row>
              <Row $h={22}><Slot $w={16}><Copy /></Slot><Label $ml={3}>Copy</Label><Arrow $ml={5} /></Row>
              <Row $h={22}><Slot $w={16}><Brush /></Slot><Label $ml={3}>Format Painter</Label></Row>
            </Column>
          </GroupBody>
          <GroupLabel>Clipboard<Launcher><LauncherIcon /></Launcher></GroupLabel>
        </Group>

        <Group $w={209}>
          <GroupBody>
            <Column $w={208} $pt={5}>
              <Row $h={31}>
                <Combo $w={113} $ml={5}>Calibri<Arrow /></Combo>
                <Combo $w={43}>11<Arrow /></Combo>
                <Slot $w={22}><GrowFont /></Slot>
                <Slot $w={22}><GrowFont down /></Slot>
              </Row>
              <Row $h={28}>
                <Slot $w={33}><Glyph>B</Glyph></Slot>
                <Slot $w={12}><Glyph $i="italic">I</Glyph></Slot>
                <Slot $w={34}><Glyph $u>U</Glyph></Slot>
                <Arrow $ml={-4} /><Divider $ml={8} $mr={10} />
                <Borders /><Arrow $ml={6} /><Divider $ml={8} $mr={8} />
                <Bucket /><Arrow $ml={4} /><Slot $w={7} />
                <FontColor /><Arrow $ml={5} />
              </Row>
            </Column>
          </GroupBody>
          <GroupLabel>Font<Launcher><LauncherIcon /></Launcher></GroupLabel>
        </Group>

        <Group $w={259}>
          <GroupBody $pl={6}>
            <Column $w={126} $pt={5}>
              <Row $h={31}>
                <Slot $w={22}><Lines rows={TOP} /></Slot>
                <Slot $w={24}><Lines rows={MID} /></Slot>
                <Pressed><Lines rows={TOP} h={8} /></Pressed>
                <Divider $ml={4} $mr={9} />
                <Orient /><Arrow $ml={1} />
              </Row>
              <Row $h={28}>
                <Slot $w={22}><Lines rows={LEFT} /></Slot>
                <Slot $w={24}><Lines rows={CENTER} /></Slot>
                <Slot $w={22}><Lines rows={RIGHT} /></Slot>
                <Divider $ml={4} $mr={8} />
                <Indent out /><Slot $w={6} /><Indent />
              </Row>
            </Column>
            <Divider $h={54} $mt={6} />
            <Column $w={119} $pt={5}>
              <Row $h={31}><Slot $w={23} $j="flex-end"><Wrap /></Slot><Label $ml={3}>Wrap Text</Label></Row>
              <Row $h={28}><Slot $w={23} $j="flex-end"><Merge /></Slot><Label $ml={3}>Merge &amp; Center</Label><Arrow $ml={5} /></Row>
            </Column>
          </GroupBody>
          <GroupLabel>Alignment<Launcher><LauncherIcon /></Launcher></GroupLabel>
        </Group>

        <Group $w={143}>
          <GroupBody>
            <Column $w={142} $pt={5}>
              <Row $h={31}><Combo $w={134} $ml={5}>General<Arrow /></Combo></Row>
              <Row $h={28}>
                <Slot $w={9} /><Currency /><Arrow $ml={3} />
                <Slot $w={30}><Label $s={12.5}>%</Label></Slot>
                <Slot $w={18}><Glyph $s={18} $up={9}>,</Glyph></Slot>
                <Divider $ml={7} $mr={8} />
                <Decimal /><Slot $w={6} /><Decimal dec />
              </Row>
            </Column>
          </GroupBody>
          <GroupLabel>Number<Launcher><LauncherIcon /></Launcher></GroupLabel>
        </Group>

        <Group $w={176}>
          <GroupBody $pl={3}>
            <Big w={73} icon={<CondFormat />} a="Conditional" b="Formatting" ls={0.1} />
            <Big w={53} icon={<FormatTable />} a="Format" b="as Table" />
            <Big w={43} icon={<CellStyles />} a="Cell" b="Styles" />
          </GroupBody>
          <GroupLabel $pr={0}>Styles</GroupLabel>
        </Group>

        <Group $w={135}>
          <GroupBody $pl={5}>
            <Big w={41} icon={<InsertCells />} a="Insert" b="" />
            <Big w={43} icon={<DeleteCells />} a="Delete" b="" />
            <Big w={41} icon={<FormatCells />} a="Format" b="" top={1} />
          </GroupBody>
          <GroupLabel $pr={0}>Cells</GroupLabel>
        </Group>

        <Group $w={177}>
          <GroupBody $pl={7}>
            <Column $w={80} $pt={1}>
              <Row $h={22}><Slot $w={18}><Glyph $s={15}>Σ</Glyph></Slot><Label $ml={2}>AutoSum</Label><Arrow $ml={4} /></Row>
              <Row $h={22}><Slot $w={18}><Fill /></Slot><Label $ml={2}>Fill</Label><Arrow $ml={5} /></Row>
              <Row $h={22}><Slot $w={18}><Eraser /></Slot><Label $ml={2}>Clear</Label><Arrow $ml={5} /></Row>
            </Column>
            <Big w={42} icon={<SortFilter />} a="Sort &amp;" b="Filter" top={1} />
            <Big w={43} icon={<Binoculars />} a="Find &amp;" b="Select" />
          </GroupBody>
          <GroupLabel $pr={0}>Editing</GroupLabel>
        </Group>
      </Ribbon>

      <FormulaBar>
        <NameBox>I11<Arrow $c="#222" /></NameBox>
        <FxArea><FxKnob /><Glyph $i="italic" $s={15}>fx</Glyph></FxArea>
        <FormulaInput />
        <Expand><svg width="9" height="6"><path d="M1 1l3.500 3.500L8 1" fill="none" stroke="#4b5058" strokeWidth="2" /></svg></Expand>
      </FormulaBar>

      <Sheet>
        <Grid>
          <GridRow $h={20}>
            <Header><svg width="12" height="12"><path d="M12 0v12H0z" fill="#b5bac0" /></svg></Header>
            {cols.map((c) => <Header key={c} $on={c === "I"}>{c === "L" ? "" : c}</Header>)}
          </GridRow>
          {rows.map((r) => (
            <GridRow key={r.n} $h={r.h}>
              <Header $row $on={r.n === 11}>{r.n}</Header>
              {cols.map((c, i) => (
                <Cell
                  key={c}
                  $bottom={i === 0 || r.low}
                  $left={i === 2 && (r.n === 11 || r.n === 8)}
                  $fill={i === 2 ? r.fill : undefined}
                >
                  {r.c[i] && <CellText $bold={r.bold} $bottom={i === 0 || r.low}>{r.c[i]}</CellText>}
                  {r.n === 11 && c === "I" && <Selection />}
                </Cell>
              ))}
            </GridRow>
          ))}
        </Grid>
        <VScroll>
          <SplitBox><svg width="8" height="2"><path d="M0 1h8" stroke="#666" /></svg></SplitBox>
          <ScrollButton $h={17}><Tri d="M0 7l4.500-5L9 7z" /></ScrollButton>
          <VThumb><svg width="8" height="8"><path d="M0 .500h8M0 2.500h8M0 4.500h8M0 6.500h8" stroke="#8f959e" /></svg></VThumb>
          <ScrollButton $h={73} />
          <ScrollButton $h={16}><Tri d="M0 2l4.500 5L9 2z" /></ScrollButton>
        </VScroll>
        <Edge />
      </Sheet>

      <TabsBar>
        <NavButtons>
          <Tri w={7} d="M0 1h1v7H0zM6 1v7L2 4.500z" />
          <Tri w={5} d="M4 1v7L0 4.500z" />
          <Tri w={5} d="M0 1v7l4-3.500z" />
          <Tri w={7} d="M0 1v7l4-3.500zM5 1h1v7H5z" />
        </NavButtons>
        <SheetTabs>
          <svg width="227" height="15">
            <path d="M181 14.500L193 .500h30L211 14.500z" fill="#e9ecf1" stroke="#9ea3ab" />
            <path d="M120 14.500L132 .500h60L180 14.500z" fill="#e9ecf1" stroke="#9ea3ab" />
            <path d="M58 14.500L70 .500h60L118 14.500z" fill="#e9ecf1" stroke="#9ea3ab" />
            <path d="M0 0h69L57 14.500H3Q1 14 0 12z" fill="#fff" stroke="#fff" />
            <path d="M195 3.500h9v8h-9zM200 11.500l4-4" fill="#dce7fa" stroke="#556fa5" />
            <path d="M194.500.500v8M190.500 4.500h8M192 2l5 5M197 2l-5 5" stroke="#e8962e" />
          </svg>
          <TabNames>
            <TabName $w={62} $bold>Sheet1</TabName>
            <TabName $w={60}>Sheet2</TabName>
            <TabName $w={50}>Sheet3</TabName>
          </TabNames>
        </SheetTabs>
        <TabFill />
        <HSplit><svg width="2" height="8"><path d="M1 0v8" stroke="#8b9097" /></svg></HSplit>
        <Slot $w={17}><Tri d="M7 0v9L2 4.500z" /></Slot>
        <HThumb><svg width="8" height="7"><path d="M.5 0v7M2.500 0v7M4.500 0v7M6.500 0v7" stroke="#8f959e" /></svg></HThumb>
        <Slot $w={62} $j="flex-end"><Slot $w={17}><Tri d="M2 0v9l5-4.500z" /></Slot></Slot>
        <HSplit><svg width="2" height="8"><path d="M1 0v8" stroke="#8b9097" /></svg></HSplit>
        <Slot $w={20} />
      </TabsBar>

      <Status>
        <ReadyBox>Ready</ReadyBox>
        <StatusRight>
          <ViewOn><svg width="13" height="11"><path d="M.5.500h12v10H.5zM0 4h13M0 7h13M4.500 0v11M8.500 0v11" fill="#fff" stroke="#777" /></svg></ViewOn>
          <Slot $w={19}><svg width="14" height="12"><path d="M.5.500h13v11H.5z" fill="#b8bcc2" stroke="#666" /><path d="M3.500 2.500h7v7h-7zM5 4.500h4M5 6.500h4" fill="#fff" stroke="#666" /></svg></Slot>
          <Slot $w={19}><svg width="14" height="12"><path d="M.5.500h13v11H.5z" fill="#999ea5" stroke="#666" /><path d="M1 1h4v6H1zM6 1h4v6H6z" fill="#fff" /></svg></Slot>
          <Slot $w={36} $j="flex-end"><Label>100%</Label></Slot>
          <Slot $w={24} $j="flex-end">
            <svg width="16" height="16"><circle cx="8" cy="8" r="7.300" fill="#f4f5f6" stroke="#70757c" /><path d="M4 8h8" stroke="#555" strokeWidth="2" /></svg>
          </Slot>
          <Slot $w={100}>
            <svg width="100" height="14"><path d="M0 7.500h100" stroke="#868b92" /><path d="M46.500 1.500h8v7l-4 4-4-4z" fill="#f7f7f8" stroke="#70757c" /></svg>
          </Slot>
          <svg width="16" height="16"><circle cx="8" cy="8" r="7.300" fill="#f4f5f6" stroke="#70757c" /><path d="M4 8h8M8 4v8" stroke="#555" strokeWidth="2" /></svg>
        </StatusRight>
      </Status>

      <Taskbar>
        <TaskButton><WinLogo /></TaskButton>
        <Search><Lens /><SearchText>Type here to search</SearchText><Emojis /></Search>
        <Slot $w={3} />
        <TaskButton><Copilot /></TaskButton>
        <TaskButton><EdgeLogo /></TaskButton>
        <TaskButton><Running><Folder /></Running></TaskButton>
        <TaskButton><Store /></TaskButton>
        <TaskButton><Outlook /></TaskButton>
        <TaskButton><Running><Chrome /></Running></TaskButton>
        <TaskButton $w={48} $active><TaskExcel /></TaskButton>
        <Slot $w={110} />
        <Tray>
          <TrayText $w={50} $s={11.5}>Desktop</TrayText>
          <Chevrons>»</Chevrons>
          <Slot $w={30}><Weather /></Slot>
          <Slot $w={6} />
          <TrayText $w={38} $s={13}>30°C</TrayText>
          <TrayText $w={49} $s={13}>Haze</TrayText>
          <Slot $w={24}><UpChevron /></Slot>
          <Slot $w={24}><MeetNow /></Slot>
          <Slot $w={24}><Battery /></Slot>
          <Slot $w={24}><Speaker /></Slot>
          <Slot $w={24}><Wifi /></Slot>
          <Slot $w={24}><Sync /></Slot>
          <Slot $w={6} />
          <TrayText $w={26} $s={11.5}>ENG</TrayText>
          <Clock><span>16:11</span><span>17-07-2025</span></Clock>
          <Slot $w={40}><Notify /></Slot>
          <Divider $h={40} $ml={4} $c="#6a6a6a" />
        </Tray>
      </Taskbar>

      <Watermark>
        <WaterTitle>Activate Windows</WaterTitle>
        <WaterSub>Go to Settings to activate Windows.</WaterSub>
      </Watermark>
    </Window>
  );
}
